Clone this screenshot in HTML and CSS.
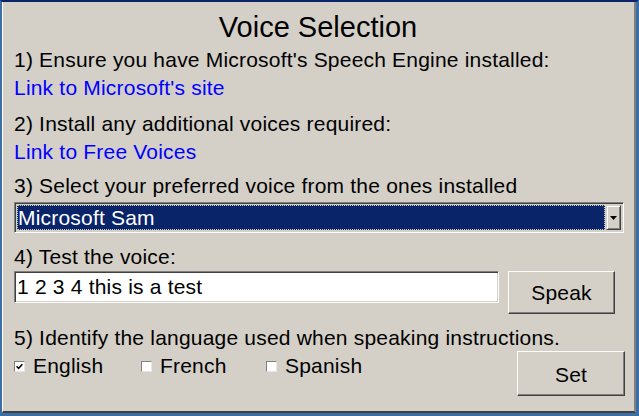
FILE: index.html
```html
<!DOCTYPE html>
<html>
<head>
<meta charset="utf-8">
<link rel="stylesheet" href="styles.css">
</head>
<body>
<div class="frame">
  <div class="window">
    <h1 class="title">Voice Selection</h1>
    <div class="label first">1) Ensure you have Microsoft's Speech Engine installed:</div>
    <a class="link" href="#">Link to Microsoft's site</a>
    <div class="label gap8">2) Install any additional voices required:</div>
    <a class="link" href="#">Link to Free Voices</a>
    <div class="label gap6">3) Select your preferred voice from the ones installed</div>
    <div class="select">
      <div class="select-value"><span class="select-text">Microsoft Sam</span></div>
      <div class="select-btn">
        <svg width="7" height="4" viewBox="0 0 7 4"><path d="M0 0h7L3.5 4z" fill="#000"/></svg>
      </div>
    </div>
    <div class="label gap10">4) Test the voice:</div>
    <div class="test-row">
      <div class="input">1 2 3 4 this is a test</div>
      <div class="button speak">Speak</div>
    </div>
    <div class="bottom-row">
      <div class="lang-col">
        <div class="label">5) Identify the language used when speaking instructions.</div>
        <div class="checks">
          <label class="check english"><span class="box"><svg width="7" height="7" viewBox="0 0 7 7"><path d="M0.6 3.2l2 2.1L6.4 1.2" fill="none" stroke="#000" stroke-width="1.5"/></svg></span>English</label>
          <label class="check french"><span class="box"></span>French</label>
          <label class="check spanish"><span class="box"></span>Spanish</label>
        </div>
      </div>
      <div class="button set">Set</div>
    </div>
  </div>
</div>
</body>
</html>
```

FILE: styles.css
```css
html, body {
  margin: 0;
  padding: 0;
}
body {
  width: 639px;
  height: 416px;
  background: #3a6ea5;
  font-family: "Liberation Sans", Arial, sans-serif;
  overflow: hidden;
}
.frame {
  box-sizing: border-box;
  width: 639px;
  height: 416px;
  border-top: 2px solid #0a246a;
  border-left: 2px solid #3a6ea5;
  border-right: 3px solid #3a6ea5;
  border-bottom: 3px solid #3a6ea5;
}
.window {
  box-sizing: border-box;
  height: 100%;
  display: flex;
  flex-direction: column;
  align-items: flex-start;
  background: #d4d0c8;
  border-left: 1px solid #ffffff;
  border-bottom: 2px solid #404040;
  border-right: 2px solid #808080;
  padding: 9px 0 0 11px;
  color: #000;
  font-size: 21px;
  letter-spacing: 0.2px;
}
.title {
  align-self: stretch;
  margin: 0;
  font-size: 29px;
  font-weight: normal;
  line-height: 32px;
  letter-spacing: 0;
  text-align: center;
  padding-right: 12px;
}
.label {
  line-height: 28px;
  white-space: nowrap;
}
.first {
  margin-top: 3px;
}
.gap8 {
  margin-top: 8px;
}
.gap6 {
  margin-top: 6px;
}
.gap10 {
  margin-top: 10px;
}
.link {
  display: block;
  line-height: 28px;
  color: #0000ff;
  text-decoration: none;
}
.select {
  margin-top: 2px;
  width: 610px;
  height: 31px;
  box-sizing: border-box;
  display: flex;
  border-top: 1px solid #808080;
  border-left: 1px solid #808080;
  border-right: 1px solid #ffffff;
  border-bottom: 1px solid #ffffff;
  box-shadow: inset 1px 1px 0 #404040, inset -1px -1px 0 #d4d0c8;
  padding: 2px;
}
.select-value {
  flex: 1;
  background: #0a246a;
  outline: 1px dotted #d4d0c8;
  outline-offset: -1px;
  color: #fff;
  line-height: 25px;
  padding-left: 1px;
}
.select-btn {
  width: 15px;
  box-sizing: border-box;
  margin-left: 1px;
  background: #d4d0c8;
  border-top: 1px solid #d4d0c8;
  border-left: 1px solid #d4d0c8;
  border-right: 1px solid #404040;
  border-bottom: 1px solid #404040;
  box-shadow: inset 1px 1px 0 #fff, inset -1px -1px 0 #808080;
  display: flex;
  align-items: center;
  justify-content: center;
}
.test-row {
  display: flex;
  align-items: flex-start;
}
.input {
  width: 485px;
  height: 32px;
  box-sizing: border-box;
  background: #fff;
  border-top: 1px solid #808080;
  border-left: 1px solid #808080;
  border-right: 1px solid #ffffff;
  border-bottom: 1px solid #ffffff;
  box-shadow: inset 1px 1px 0 #404040, inset -1px -1px 0 #d4d0c8;
  line-height: 30px;
  padding-left: 2px;
}
.button {
  box-sizing: border-box;
  background: #d4d0c8;
  border-top: 1px solid #ffffff;
  border-left: 1px solid #ffffff;
  border-right: 1px solid #404040;
  border-bottom: 1px solid #404040;
  box-shadow: inset -1px -1px 0 #808080;
  display: flex;
  align-items: center;
  justify-content: center;
}
.speak {
  width: 107px;
  height: 43px;
  margin-left: 9px;
  padding-top: 1px;
}
.bottom-row {
  display: flex;
  align-items: flex-start;
  margin-top: 10px;
}
.lang-col {
  width: 503px;
}
.checks {
  display: flex;
  line-height: 28px;
}
.check {
  display: flex;
  align-items: center;
}
.box {
  box-sizing: border-box;
  width: 11px;
  height: 11px;
  background: #fff;
  border-top: 1px solid #808080;
  border-left: 1px solid #808080;
  border-right: 1px solid #e8e6e2;
  border-bottom: 1px solid #e8e6e2;
  margin-right: 8px;
  display: flex;
  align-items: center;
  justify-content: center;
}
.english {
  width: 127px;
}
.french {
  width: 125px;
}
.set {
  width: 108px;
  height: 45px;
  margin-top: 27px;
  padding-top: 2px;
}
```
